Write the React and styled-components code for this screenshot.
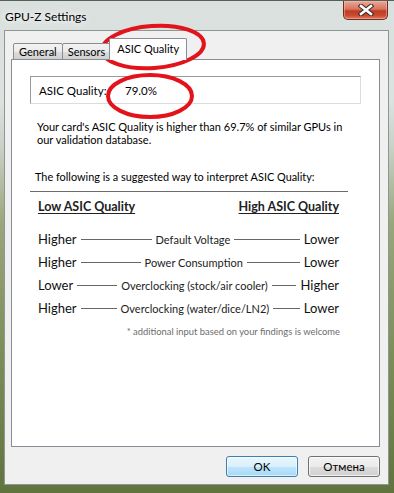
import React from "react";
import styled, { createGlobalStyle } from "styled-components";

const GlobalStyle = createGlobalStyle`
  html, body { margin: 0; padding: 0; }
  body { width: 394px; height: 493px; overflow: hidden; font-family: "Lato", "Noto Sans", sans-serif; }
`;

const Window = styled.div`
  position: relative;
  width: 394px;
  height: 493px;
  box-sizing: border-box;
  display: flex;
  flex-direction: column;
  border-top: 1px solid #55605a;
  background: linear-gradient(to bottom, #d9e0de 0%, #dce2df 20%, #c9d0c6 30%, #9aa67c 45%, #7f8f5c 70%, #61733f 100%);
`;

const TitleBar = styled.div`
  height: 29px;
  display: flex;
  align-items: flex-start;
  flex-shrink: 0;
`;

const Title = styled.div`
  margin: 8px 0 0 5px;
  font-size: 12px;
  color: #000;
  text-shadow: 0 0 6px #fff, 0 0 10px #fff;
`;

const CloseButton = styled.div`
  margin-left: auto;
  margin-right: 6px;
  width: 45px;
  height: 19px;
  box-sizing: border-box;
  border: 1px solid #6e2d22;
  border-top: none;
  border-radius: 0 0 5px 5px;
  background: linear-gradient(to bottom, #e9a898 0%, #d9745f 45%, #c03c24 55%, #c94a30 80%, #e07a5c 100%);
  display: flex;
  align-items: center;
  justify-content: center;
  box-shadow: inset 0 0 0 1px rgba(255, 200, 190, 0.45);
`;

const Client = styled.div`
  flex: 1;
  margin: 0 5px 8px 4px;
  background: #f0f0f0;
  border: 1px solid #8c9692;
  display: flex;
  flex-direction: column;
  padding: 7px 8px 0 6px;
`;

const TabStrip = styled.div`
  display: flex;
  align-items: flex-end;
  height: 22px;
  padding-left: 2px;
  position: relative;
  z-index: 1;
`;

const Tab = styled.div`
  box-sizing: border-box;
  height: ${(p) => (p.$active ? "22px" : "17px")};
  margin: ${(p) => (p.$active ? "0 -2px 0 -2px" : "0 0 0 -1px")};
  padding: ${(p) => (p.$active ? "3px 7px 0" : "1px 5px 0")};
  border: 1px solid #898c95;
  border-bottom: ${(p) => (p.$active ? "none" : "1px solid #898c95")};
  border-radius: 2px 2px 0 0;
  background: ${(p) =>
    p.$active ? "#ffffff" : "linear-gradient(to bottom, #f3f3f3 0%, #ebebeb 50%, #dddddd 51%, #cfcfcf 100%)"};
  font-size: 11px;
  line-height: 14px;
  color: #000;
  white-space: nowrap;
  &:first-child { margin-left: 0; }
`;

const Panel = styled.div`
  margin-top: -1px;
  height: 388px;
  box-sizing: border-box;
  border: 1px solid #898c95;
  background: #fff;
  padding: 16px 18px 0 18px;
  display: flex;
  flex-direction: column;
`;

const FieldBox = styled.div`
  height: 28px;
  box-sizing: border-box;
  border: 1px solid #dcdcdc;
  border-top-color: #9a9a9a;
  border-left-color: #9a9a9a;
  display: flex;
  align-items: center;
  padding-left: 8px;
  font-size: 11.5px;
  color: #000;
`;

const FieldLabel = styled.span`
  width: 86px;
`;

const Paragraph = styled.p`
  margin: 16px 0 0 7px;
  font-size: 11px;
  line-height: 13px;
  color: #000;
  white-space: nowrap;
`;

const Intro = styled.p`
  margin: 24px 0 0 5px;
  font-size: 10.9px;
  line-height: 14px;
  color: #000;
  white-space: nowrap;
`;

const Rule = styled.div`
  margin-top: 7px;
  width: 318px;
  height: 1px;
  background: #6b6b6b;
`;

const Legend = styled.div`
  margin: 0 22px 0 8px;
  display: flex;
  flex-direction: column;
`;

const HeaderRow = styled.div`
  display: flex;
  justify-content: space-between;
  margin-top: 7px;
  font-size: 12.5px;
  font-weight: 700;
  line-height: 16px;
  color: #222;
  text-decoration: underline;
  text-decoration-thickness: 1px;
  text-underline-offset: 2px;
`;

const RowList = styled.div`
  margin-top: 15px;
  display: flex;
  flex-direction: column;
  gap: 5px;
`;

const Row = styled.div`
  display: flex;
  align-items: center;
  height: 18px;
  color: #111;
`;

const Word = styled.span`
  font-size: 13px;
  white-space: nowrap;
`;

const Connector = styled.span`
  height: 1px;
  background: #666;
  margin: 0 4px;
  ${(p) => (p.$width ? `width: ${p.$width}px; flex: none;` : "flex: 1;")}
`;

const Label = styled.span`
  font-size: 11px;
  white-space: nowrap;
  color: #222;
`;

const Footnote = styled.div`
  margin: 8px 21px 0 0;
  text-align: right;
  font-size: 9.4px;
  line-height: 13px;
  color: #6d6d6d;
`;

const ButtonRow = styled.div`
  display: flex;
  justify-content: flex-end;
  gap: 10px;
  padding-top: 9px;
`;

const Button = styled.div`
  width: 72px;
  height: 21px;
  box-sizing: border-box;
  border: 1px solid ${(p) => (p.$primary ? "#3c7fb1" : "#707070")};
  border-radius: 3px;
  display: flex;
  align-items: center;
  justify-content: center;
  font-size: 11.5px;
  color: #000;
  background: ${(p) =>
    p.$primary
      ? "linear-gradient(to bottom, #eaf6fd 0%, #d9f0fc 50%, #bee6fd 51%, #a7d9f5 100%)"
      : "linear-gradient(to bottom, #f2f2f2 0%, #ebebeb 50%, #dddddd 51%, #cfcfcf 100%)"};
  box-shadow: inset 0 0 0 1px ${(p) => (p.$primary ? "rgba(255,255,255,0.6)" : "rgba(255,255,255,0.7)")};
`;

const Annotation = styled.svg`
  position: absolute;
  left: 0;
  top: 0;
  pointer-events: none;
`;

const rows = [
  { left: "Higher", label: "Default Voltage", right: "Lower", line: 71 },
  { left: "Higher", label: "Power Consumption", right: "Lower", line: 60 },
  { left: "Lower", label: "Overclocking (stock/air cooler)", right: "Higher", line: 40 },
  { left: "Higher", label: "Overclocking (water/dice/LN2)", right: "Lower", line: 36 },
];

export default function App() {
  return (
    <>
      <GlobalStyle />
      <Window>
        <TitleBar>
          <Title>GPU-Z Settings</Title>
          <CloseButton>
            <svg width="16" height="12" viewBox="0 0 16 12">
              <path d="M3 2 L13 10 M13 2 L3 10" stroke="#3a2a28" strokeWidth="4.6" strokeLinecap="square" />
              <path d="M3 2 L13 10 M13 2 L3 10" stroke="#ffffff" strokeWidth="2.6" strokeLinecap="square" />
            </svg>
          </CloseButton>
        </TitleBar>
        <Client>
          <TabStrip>
            <Tab>General</Tab>
            <Tab>Sensors</Tab>
            <Tab $active>ASIC Quality</Tab>
          </TabStrip>
          <Panel>
            <FieldBox>
              <FieldLabel>ASIC Quality:</FieldLabel>
              <span>79.0%</span>
            </FieldBox>
            <Paragraph>
              Your card's ASIC Quality is higher than 69.7% of similar GPUs in
              <br />
              our validation database.
            </Paragraph>
            <Intro>The following is a suggested way to interpret ASIC Quality:</Intro>
            <Rule />
            <Legend>
              <HeaderRow>
                <span>Low ASIC Quality</span>
                <span>High ASIC Quality</span>
              </HeaderRow>
              <RowList>
                {rows.map((r) => (
                  <Row key={r.label}>
                    <Word>{r.left}</Word>
                    <Connector $width={r.line} />
                    <Label>{r.label}</Label>
                    <Connector />
                    <Word>{r.right}</Word>
                  </Row>
                ))}
              </RowList>
            </Legend>
            <Footnote>* additional input based on your findings is welcome</Footnote>
          </Panel>
          <ButtonRow>
            <Button $primary>OK</Button>
            <Button>Отмена</Button>
          </ButtonRow>
        </Client>
        <Annotation width="394" height="493" viewBox="0 0 394 493">
          <ellipse cx="153" cy="46" rx="51" ry="21" transform="rotate(-4 153 46)" fill="none" stroke="#e3131b" strokeWidth="4" />
          <ellipse cx="150" cy="95" rx="42" ry="21" fill="none" stroke="#e3131b" strokeWidth="4" />
        </Annotation>
      </Window>
    </>
  );
}
